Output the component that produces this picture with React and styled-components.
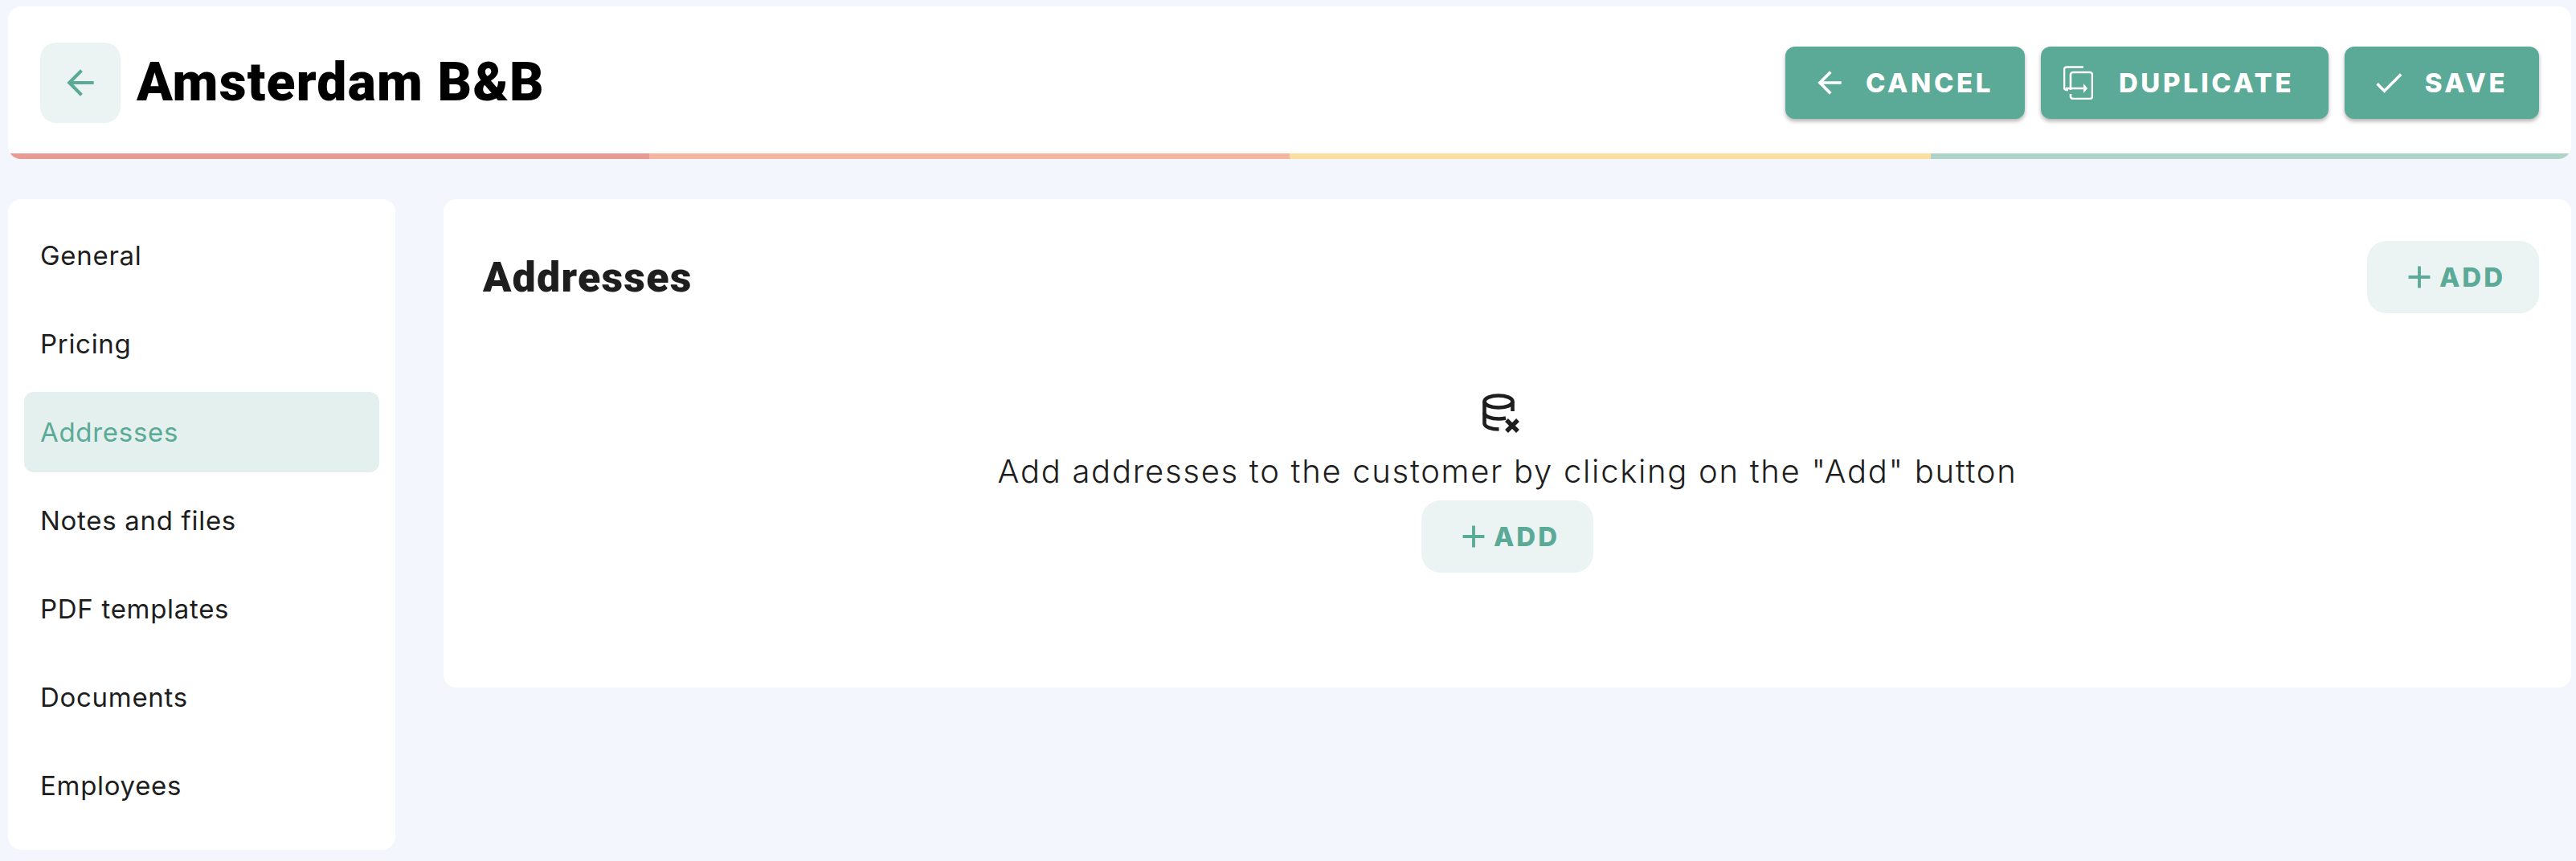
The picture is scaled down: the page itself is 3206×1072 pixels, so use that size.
import React from 'react';
import styled, { createGlobalStyle } from 'styled-components';
import { MdArrowBack, MdCheck, MdAdd } from 'react-icons/md';

const GlobalStyle = createGlobalStyle`
  html, body {
    margin: 0;
    padding: 0;
    background: #f3f6fd;
  }
  body {
    font-family: "Inter", "Open Sans", sans-serif;
    color: #1e1e1e;
  }
`;

const Page = styled.div`
  width: 3206px;
  height: 1072px;
  box-sizing: border-box;
  padding: 8px 6px 0 10px;
  overflow: hidden;
`;

const Header = styled.header`
  background: #fff;
  border-radius: 16px;
  overflow: hidden;
`;

const HeaderRow = styled.div`
  display: flex;
  align-items: center;
  justify-content: space-between;
  padding: 45px 40px 38px 40px;
`;

const TitleGroup = styled.div`
  display: flex;
  align-items: center;
  gap: 20px;
`;

const BackButton = styled.button`
  width: 100px;
  height: 100px;
  border: 0;
  padding: 0;
  border-radius: 20px;
  background: #ebf4f2;
  color: #5baa97;
  display: flex;
  align-items: center;
  justify-content: center;
`;

const Title = styled.h1`
  margin: 0;
  font-family: "Roboto", sans-serif;
  font-weight: 900;
  font-size: 66px;
  letter-spacing: 1.2px;
  line-height: 100px;
  color: #000;
`;

const Actions = styled.div`
  display: flex;
  gap: 20px;
`;

const ActionButton = styled.button`
  height: 90px;
  width: ${p => p.$width}px;
  border: 0;
  padding: 0 6px 0 0;
  border-radius: 12px;
  background: #5baa97;
  color: #fff;
  display: flex;
  align-items: center;
  justify-content: center;
  gap: 23px;
  font-family: "Inter", sans-serif;
  font-weight: 800;
  font-size: 33px;
  letter-spacing: 3.6px;
  box-shadow: 0 3px 5px rgba(0, 0, 0, 0.3);
`;

const Progress = styled.div`
  display: flex;
  height: 7px;
`;

const ProgressPart = styled.div`
  flex: 1;
  background: ${p => p.$color};
`;

const Columns = styled.div`
  display: flex;
  align-items: flex-start;
  gap: 60px;
  margin-top: 50px;
`;

const Sidebar = styled.nav`
  width: 482px;
  box-sizing: border-box;
  padding: 20px 20px 30px;
  background: #fff;
  border-radius: 16px;
  display: flex;
  flex-direction: column;
  gap: 10px;
`;

const NavItem = styled.a`
  height: 100px;
  padding-left: 20px;
  border-radius: 12px;
  display: flex;
  align-items: center;
  font-size: 33px;
  font-weight: 400;
  letter-spacing: 0.7px;
  color: ${p => (p.$active ? '#5baa97' : '#1e1e1e')};
  background: ${p => (p.$active ? '#e4f0ed' : 'transparent')};
`;

const Card = styled.main`
  flex: 1;
  height: 608px;
  background: #fff;
  border-radius: 16px;
  padding-top: 52px;
  box-sizing: border-box;
`;

const CardHead = styled.div`
  display: flex;
  align-items: center;
  justify-content: space-between;
  padding: 0 40px 0 49px;
`;

const CardTitle = styled.h2`
  margin: 0;
  font-family: "Roboto", sans-serif;
  font-weight: 900;
  font-size: 52px;
  letter-spacing: 1.2px;
  color: #1e1e1e;
`;

const AddButton = styled.button`
  width: 214px;
  height: 90px;
  border: 0;
  padding: 0;
  border-radius: 24px;
  background: #ebf4f2;
  color: #5baa97;
  display: flex;
  align-items: center;
  justify-content: center;
  gap: 2px;
  font-family: "Inter", sans-serif;
  font-weight: 800;
  font-size: 33px;
  letter-spacing: 3px;
`;

const Empty = styled.div`
  display: flex;
  flex-direction: column;
  align-items: center;
  margin-top: 100px;
`;

const EmptyIcon = styled.svg`
  display: block;
  margin-right: 14px;
`;

const EmptyText = styled.p`
  margin: 18px 0 8px;
  font-size: 40px;
  line-height: 57px;
  font-weight: 300;
  letter-spacing: 1.7px;
  color: #1e1e1e;
`;

const CopyIcon = styled.svg`
  margin: 0 9px 0 -9px;
`;

// thin copy icon with the little arrow between both sheets
const DuplicateIcon = () => (
  <CopyIcon width="37" height="42" viewBox="0 0 37 42" fill="none" stroke="currentColor" strokeWidth="2.6">
    <path d="M25 1.500H4a3 3 0 0 0-3 3V27a3 3 0 0 0 3 3h2" />
    <path d="M9 30V11a3 3 0 0 1 3-3h21a3 3 0 0 1 3 3v27a3 3 0 0 1-3 3H12a3 3 0 0 1-3-3v-3" />
    <path d="M3 28h23" />
    <path d="M25 22l5 6-5 6z" fill="currentColor" stroke="none" />
  </CopyIcon>
);

const DatabaseXIcon = () => (
  <EmptyIcon width="48" height="50" viewBox="0 0 48 50" fill="none" stroke="#1e1e1e" strokeWidth="4.6">
    <ellipse cx="20" cy="10" rx="17.5" ry="7.5" />
    <path d="M2.500 10v27c0 4.500 8 7.500 18 7.500" />
    <path d="M37.500 10v12" />
    <path d="M2.500 24c0 4.500 8 7.500 17.500 7.500 3.500 0 6-.3 9-1" />
    <path d="M30 33l14 14M44 33L30 47" strokeWidth="5.4" />
  </EmptyIcon>
);

const navItems = ['General', 'Pricing', 'Addresses', 'Notes and files', 'PDF templates', 'Documents', 'Employees'];
const progressColors = ['#e99a92', '#f5b5a0', '#fbdf9f', '#aed3c8'];

const App = () => (
  <Page>
    <GlobalStyle />
    <Header>
      <HeaderRow>
        <TitleGroup>
          <BackButton><MdArrowBack size={50} /></BackButton>
          <Title>Amsterdam B&amp;B</Title>
        </TitleGroup>
        <Actions>
          <ActionButton $width={298}><MdArrowBack size={44} />CANCEL</ActionButton>
          <ActionButton $width={358}><DuplicateIcon />DUPLICATE</ActionButton>
          <ActionButton $width={242}><MdCheck size={44} />SAVE</ActionButton>
        </Actions>
      </HeaderRow>
      <Progress>
        {progressColors.map(color => <ProgressPart key={color} $color={color} />)}
      </Progress>
    </Header>

    <Columns>
      <Sidebar>
        {navItems.map(item => (
          <NavItem key={item} $active={item === 'Addresses'}>{item}</NavItem>
        ))}
      </Sidebar>

      <Card>
        <CardHead>
          <CardTitle>Addresses</CardTitle>
          <AddButton><MdAdd size={46} />ADD</AddButton>
        </CardHead>
        <Empty>
          <DatabaseXIcon />
          <EmptyText>Add addresses to the customer by clicking on the "Add" button</EmptyText>
          <AddButton><MdAdd size={46} />ADD</AddButton>
        </Empty>
      </Card>
    </Columns>
  </Page>
);

export default App;
